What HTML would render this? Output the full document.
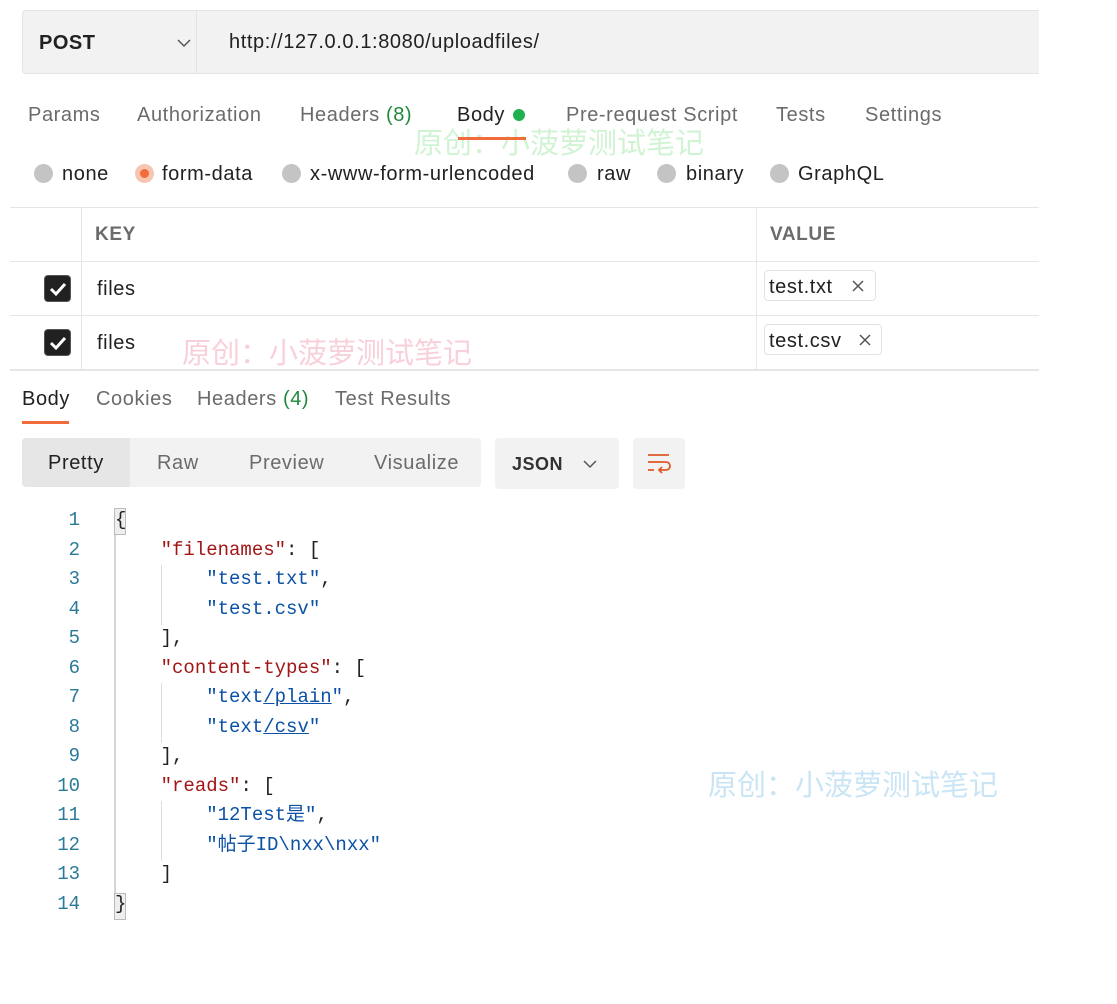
<!DOCTYPE html>
<html><head><meta charset="utf-8"><style>
*{box-sizing:border-box;margin:0;padding:0}
body{width:1117px;height:1004px;background:#fff;font-family:"Liberation Sans","Noto Sans CJK SC",sans-serif;color:#212121;position:relative;overflow:hidden}
.a{position:absolute;white-space:nowrap}
.t{font-size:20px;letter-spacing:0.6px;color:#6b6b6b}
.mono{font-family:"Liberation Mono","Noto Sans CJK SC",monospace;font-size:19px}
.ln{color:#2a7a9a;width:60px;text-align:right}
.k{color:#a31515}.s{color:#0b51a5}.p{color:#212121}
.rad{width:19px;height:19px;border-radius:50%;background:#c4c4c4}
.cb{width:27px;height:27px;background:#212121;border-radius:4px;border:1px solid #555}
.wm{font-size:29px;font-family:"Noto Sans CJK SC",sans-serif}
</style></head><body>
<div class="a" style="left:22px;top:10px;width:1030px;height:64px;background:#f2f2f2;border:1px solid #e4e4e4;border-radius:4px"></div>
<div class="a" style="left:196px;top:11px;width:1px;height:62px;background:#e2e2e2"></div>
<div class="a" style="left:39px;top:32px;font-size:20px;font-weight:bold;letter-spacing:0.5px">POST</div>
<svg class="a" style="left:176px;top:38px" width="16" height="10"><path d="M2 2l6 6 6-6" stroke="#555" stroke-width="1.5" fill="none"/></svg>
<div class="a" style="left:229px;top:31px;font-size:20px;letter-spacing:0.6px">http://127.0.0.1:8080/uploadfiles/</div>
<div class="a" style="left:1039px;top:0;width:78px;height:1004px;background:#fff"></div>

<div class="a t" style="left:28px;top:104px">Params</div>
<div class="a t" style="left:137px;top:104px">Authorization</div>
<div class="a t" style="left:300px;top:104px">Headers <span style="color:#1e8a3a">(8)</span></div>
<div class="a t" style="left:457px;top:104px;color:#212121">Body</div>
<div class="a" style="left:513px;top:109px;width:12px;height:12px;border-radius:50%;background:#1fb14f"></div>
<div class="a t" style="left:566px;top:104px">Pre-request Script</div>
<div class="a t" style="left:776px;top:104px">Tests</div>
<div class="a t" style="left:865px;top:104px">Settings</div>
<div class="a wm" style="left:414px;top:120px;color:rgba(120,220,130,.35)">原创：小菠萝测试笔记</div>
<div class="a" style="left:458px;top:137px;width:68px;height:3px;background:#f26b3a"></div>

<div class="a rad" style="left:34px;top:164px"></div><div class="a t" style="left:62px;top:163px;color:#212121">none</div>
<div class="a rad" style="left:135px;top:164px;background:#f7c5b1"></div><div class="a" style="left:140px;top:169px;width:9px;height:9px;border-radius:50%;background:#f26b3a"></div><div class="a t" style="left:162px;top:163px;color:#212121">form-data</div>
<div class="a rad" style="left:282px;top:164px"></div><div class="a t" style="left:310px;top:163px;color:#212121">x-www-form-urlencoded</div>
<div class="a rad" style="left:568px;top:164px"></div><div class="a t" style="left:597px;top:163px;color:#212121">raw</div>
<div class="a rad" style="left:657px;top:164px"></div><div class="a t" style="left:686px;top:163px;color:#212121">binary</div>
<div class="a rad" style="left:770px;top:164px"></div><div class="a t" style="left:798px;top:163px;color:#212121">GraphQL</div>

<div class="a" style="left:10px;top:207px;width:1029px;height:1px;background:#e6e6e6"></div>
<div class="a" style="left:10px;top:261px;width:1029px;height:1px;background:#e6e6e6"></div>
<div class="a" style="left:10px;top:315px;width:1029px;height:1px;background:#e6e6e6"></div>
<div class="a" style="left:10px;top:369px;width:1029px;height:2px;background:#e6e6e6"></div>
<div class="a" style="left:81px;top:207px;width:1px;height:162px;background:#e6e6e6"></div>
<div class="a" style="left:756px;top:207px;width:1px;height:162px;background:#e6e6e6"></div>
<div class="a" style="left:95px;top:224px;font-size:19px;font-weight:bold;color:#6b6b6b;letter-spacing:0.6px">KEY</div>
<div class="a" style="left:770px;top:224px;font-size:19px;font-weight:bold;color:#6b6b6b;letter-spacing:0.6px">VALUE</div>
<div class="a cb" style="left:44px;top:275px"></div><svg class="a" style="left:48px;top:280px" width="20" height="18"><path d="M3 9l5 5 9-10" stroke="#fff" stroke-width="3" fill="none"/></svg>
<div class="a cb" style="left:44px;top:329px"></div><svg class="a" style="left:48px;top:334px" width="20" height="18"><path d="M3 9l5 5 9-10" stroke="#fff" stroke-width="3" fill="none"/></svg>
<div class="a t" style="left:97px;top:278px;color:#212121">files</div>
<div class="a t" style="left:97px;top:332px;color:#212121">files</div>
<div class="a wm" style="left:182px;top:330px;color:rgba(240,150,170,.45)">原创：小菠萝测试笔记</div>
<div class="a" style="left:764px;top:270px;width:112px;height:31px;border:1px solid #e2e2e2;border-radius:4px"></div>
<div class="a t" style="left:769px;top:276px;color:#212121">test.txt</div>
<svg class="a" style="left:851px;top:279px" width="14" height="14"><path d="M2 2l10 10M12 2L2 12" stroke="#555" stroke-width="1.5"/></svg>
<div class="a" style="left:764px;top:324px;width:118px;height:31px;border:1px solid #e2e2e2;border-radius:4px"></div>
<div class="a t" style="left:769px;top:330px;color:#212121">test.csv</div>
<svg class="a" style="left:858px;top:333px" width="14" height="14"><path d="M2 2l10 10M12 2L2 12" stroke="#555" stroke-width="1.5"/></svg>

<div class="a t" style="left:22px;top:388px;color:#212121">Body</div>
<div class="a t" style="left:96px;top:388px">Cookies</div>
<div class="a t" style="left:197px;top:388px">Headers <span style="color:#1e8a3a">(4)</span></div>
<div class="a t" style="left:335px;top:388px">Test Results</div>
<div class="a" style="left:22px;top:421px;width:47px;height:3px;background:#f26b3a"></div>

<div class="a" style="left:22px;top:438px;width:459px;height:49px;background:#f2f2f2;border-radius:4px"></div>
<div class="a" style="left:22px;top:438px;width:108px;height:49px;background:#e6e6e6;border-radius:4px 0 0 4px"></div>
<div class="a t" style="left:48px;top:452px;color:#212121">Pretty</div>
<div class="a t" style="left:157px;top:452px">Raw</div>
<div class="a t" style="left:249px;top:452px">Preview</div>
<div class="a t" style="left:374px;top:452px">Visualize</div>
<div class="a" style="left:495px;top:438px;width:124px;height:51px;background:#f2f2f2;border-radius:4px"></div>
<div class="a" style="left:512px;top:454px;font-size:18px;font-weight:bold;color:#333;letter-spacing:0.5px">JSON</div>
<svg class="a" style="left:582px;top:459px" width="16" height="10"><path d="M2 2l6 6 6-6" stroke="#555" stroke-width="1.5" fill="none"/></svg>
<div class="a" style="left:633px;top:438px;width:52px;height:51px;background:#f2f2f2;border-radius:4px"></div>
<svg class="a" style="left:645px;top:451px" width="28" height="26"><path d="M3 4h21M3 11h18a4 4 0 0 1 0 8h-7M17 16l-3 3 3 3M3 19h6" stroke="#e0582a" stroke-width="1.8" fill="none"/></svg>

<div class="a" style="left:114px;top:508px;width:12px;height:27px;background:#eee;border:1px solid #bbb"></div>
<div class="a" style="left:114px;top:893px;width:12px;height:27px;background:#eee;border:1px solid #bbb"></div>
<div class="a" style="left:114px;top:535px;width:2px;height:358px;background:#d6d6d6"></div>
<div class="a" style="left:161px;top:565px;width:1px;height:60px;background:#ddd"></div>
<div class="a" style="left:161px;top:683px;width:1px;height:60px;background:#ddd"></div>
<div class="a" style="left:161px;top:801px;width:1px;height:60px;background:#ddd"></div>
<div class="a mono" style="left:20px;top:506px;line-height:29.5px">
<div class="ln">1</div><div class="ln">2</div><div class="ln">3</div><div class="ln">4</div><div class="ln">5</div><div class="ln">6</div><div class="ln">7</div><div class="ln">8</div><div class="ln">9</div><div class="ln">10</div><div class="ln">11</div><div class="ln">12</div><div class="ln">13</div><div class="ln">14</div>
</div>
<div class="a mono" style="left:115px;top:506px;line-height:29.5px;white-space:pre"><div class="p">{</div><div>    <span class="k">"filenames"</span><span class="p">: [</span></div><div>        <span class="s">"test.txt"</span>,</div><div>        <span class="s">"test.csv"</span></div><div>    ],</div><div>    <span class="k">"content-types"</span>: [</div><div>        <span class="s">"text<u>/plain</u>"</span>,</div><div>        <span class="s">"text<u>/csv</u>"</span></div><div>    ],</div><div>    <span class="k">"reads"</span>: [</div><div>        <span class="s">"12Test是"</span>,</div><div>        <span class="s">"帖子ID\nxx\nxx"</span></div><div>    ]</div><div>}</div></div>
<div class="a wm" style="left:708px;top:762px;color:rgba(120,190,230,.4)">原创：小菠萝测试笔记</div>
</body></html>
